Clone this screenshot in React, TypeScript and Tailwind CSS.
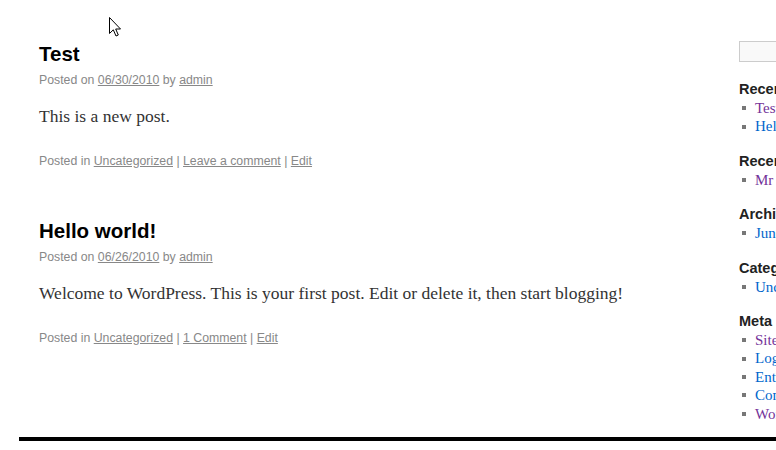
const serif = { fontFamily: '"Liberation Serif", Georgia, serif' }
const sans = { fontFamily: '"Liberation Sans", Arial, sans-serif' }

type Post = {
  title: string
  date: string
  body: string
  comments: string
}

const posts: Post[] = [
  { title: 'Test', date: '06/30/2010', body: 'This is a new post.', comments: 'Leave a comment' },
  {
    title: 'Hello world!',
    date: '06/26/2010',
    body: 'Welcome to WordPress. This is your first post. Edit or delete it, then start blogging!',
    comments: '1 Comment',
  },
]

type Widget = {
  title: string
  items: { label: string; visited?: boolean }[]
}

const widgets: Widget[] = [
  { title: 'Recent Posts', items: [{ label: 'Test', visited: true }, { label: 'Hello world!' }] },
  { title: 'Recent Comments', items: [{ label: 'Mr WordPress on Hello world!', visited: true }] },
  { title: 'Archives', items: [{ label: 'June 2010' }] },
  { title: 'Categories', items: [{ label: 'Uncategorized' }] },
  {
    title: 'Meta',
    items: [
      { label: 'Site Admin', visited: true },
      { label: 'Log out' },
      { label: 'Entries RSS' },
      { label: 'Comments RSS' },
      { label: 'WordPress.org', visited: true },
    ],
  },
]

function PostEntry({ post, first }: { post: Post; first: boolean }) {
  return (
    <div className={first ? '' : 'mt-[47px]'}>
      <h2 className="text-[20.5px] font-bold leading-[27px] text-black" style={sans}>
        {post.title}
      </h2>
      <div className="mt-[4px] text-[12.3px] leading-[18px] text-[#888]" style={sans}>
        Posted on <a className="underline">{post.date}</a> by <a className="underline">admin</a>
      </div>
      <p className="mt-[15px] text-[17.5px] leading-[24px] text-[#333]" style={serif}>
        {post.body}
      </p>
      <div className="mt-[24px] text-[12.3px] leading-[18px] text-[#888]" style={sans}>
        Posted in <a className="underline">Uncategorized</a> | <a className="underline">{post.comments}</a> |{' '}
        <a className="underline">Edit</a>
      </div>
    </div>
  )
}

function Sidebar() {
  return (
    <div className="ml-[60px] w-[220px] shrink-0 pt-[41px]">
      <div className="h-[21px] w-[200px] border border-[#ccc] bg-[#f9f9f9]" />
      {widgets.map((w, i) => (
        <div key={w.title} className={i === 0 ? 'mt-[18px]' : 'mt-[16px]'}>
          <h3 className="whitespace-nowrap text-[14.5px] font-bold leading-[18px] text-[#222]" style={sans}>
            {w.title}
          </h3>
          <ul className="mt-[1px]">
            {w.items.map((item) => (
              <li key={item.label} className="flex items-center whitespace-nowrap pl-[3px] text-[15px] leading-[18.4px]" style={serif}>
                <span className="mr-[9px] h-[4px] w-[4px] shrink-0 bg-[#777]" />
                <a className={item.visited ? 'text-[#743399]' : 'text-[#0066cc]'}>{item.label}</a>
              </li>
            ))}
          </ul>
        </div>
      ))}
    </div>
  )
}

export default function App() {
  return (
    <div className="relative h-[450px] w-[776px] overflow-hidden bg-white">
      <div className="ml-[19px] flex h-[437px] w-[940px]">
        <div className="ml-[20px] w-[640px] shrink-0 pt-[40px]">
          {posts.map((p, i) => (
            <PostEntry key={p.title} post={p} first={i === 0} />
          ))}
        </div>
        <Sidebar />
      </div>
      <div className="ml-[19px] w-[940px] border-t-4 border-black" />
      <svg className="absolute left-[109px] top-[17px]" width="13" height="21" viewBox="0 0 13 21">
        <path
          d="M0.5 0.5 L0.5 16.5 L4.3 12.8 L7 19 L9.3 18 L6.7 12 L11.5 12 Z"
          fill="white"
          stroke="black"
          strokeWidth="1"
          strokeLinejoin="round"
        />
      </svg>
    </div>
  )
}
